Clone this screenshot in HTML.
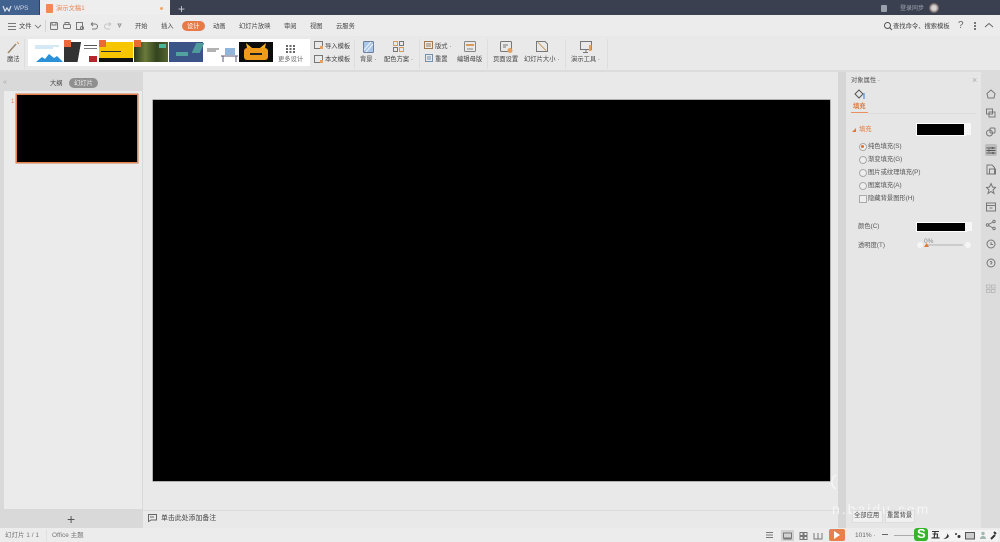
<!DOCTYPE html>
<html lang="zh"><head><meta charset="utf-8"><title>WPS</title>
<style>
html,body{margin:0;padding:0;background:#e8e8e8}
#r{position:relative;width:1000px;height:542px;overflow:hidden;background:#e8e8e8;font-family:"Liberation Sans","Noto Sans CJK SC",sans-serif;color:#555;filter:blur(.35px)}
#r div,#r span.t,#r svg{position:absolute}
.t{position:absolute;white-space:nowrap;font-size:6.3px;line-height:10px;color:#555;transform:translateY(.8px)}
svg{overflow:visible}
</style></head><body><div id="r">
<!-- title bar -->
<div style="left:0;top:0;width:1000px;height:15px;background:#3b4050"></div>
<div style="left:0;top:0;width:39px;height:15px;background:#41618f"></div>
<div style="left:40px;top:0;width:130px;height:15px;background:#eeeeee"></div>
<svg style="left:3px;top:6px" width="8" height="6"><path d="M0 0L2 5L4 2L6 5L8 0" fill="none" stroke="#d5deea" stroke-width="1.2"/></svg>
<span class="t" style="left:14px;top:3px;color:#cfd8e6">WPS</span>
<div style="left:46px;top:4px;width:7px;height:9px;background:#ee8a55;border-radius:1px"></div>
<span class="t" style="left:56px;top:3px;color:#e98552">演示文稿1</span>
<div style="left:160px;top:7px;width:3px;height:3px;background:#eda765;border-radius:50%"></div>
<span class="t" style="left:178px;top:3px;font-size:12px;color:#c8ccd4">+</span>
<div style="left:881px;top:5px;width:6px;height:7px;background:#9aa0ac;border-radius:1px"></div>
<span class="t" style="left:900px;top:3px;font-size:6px;color:#a0a5b0">登录同步</span>
<div style="left:929px;top:3px;width:10px;height:10px;background:radial-gradient(circle,#d8d4d4 30%,#6a5a5a 70%);border-radius:50%"></div>

<!-- toolbar -->
<div style="left:0;top:15px;width:1000px;height:21px;background:#ececec"></div>
<svg style="left:8px;top:23px" width="8" height="7"><path d="M0 .5H8M0 3.5H8M0 6.5H8" stroke="#777" stroke-width="1"/></svg>
<span class="t" style="left:19px;top:21px;color:#444">文件</span>
<svg style="left:35px;top:25px" width="6" height="4"><path d="M0 0L3 3L6 0" fill="none" stroke="#888"/></svg>
<div style="left:45px;top:20px;width:1px;height:12px;background:#d4d4d4"></div>
<svg style="left:50px;top:22px" width="70" height="8" fill="none" stroke="#777">
<rect x=".5" y=".5" width="7" height="7" rx="1"/><path d="M2 .5V3H6V.5"/>
<rect x="13.5" y="2.5" width="7" height="4" rx="1"/><path d="M15 2V.5H19V2"/>
<rect x="26.5" y=".5" width="6" height="7"/><circle cx="32" cy="6" r="1.5"/>
<path d="M41 2H45A2.5 2.500 0 0 1 45 7H42M41 2L43 .5M41 2L43 4"/>
<path d="M61 2H57A2.5 2.500 0 0 0 57 7H60M61 2L59 .5M61 2L59 4" stroke="#c4c4c4"/>
<path d="M68 2H71L69.500 5Z" stroke="#999"/>
</svg>
<span class="t" style="left:135px;top:21px;color:#444">开始</span>
<span class="t" style="left:161px;top:21px;color:#444">插入</span>
<div style="left:182px;top:21px;width:23px;height:10px;background:#e67b48;border-radius:5px"></div>
<span class="t" style="left:187px;top:21px;color:#fff">设计</span>
<span class="t" style="left:213px;top:21px;color:#444">动画</span>
<span class="t" style="left:239px;top:21px;color:#444">幻灯片放映</span>
<span class="t" style="left:284px;top:21px;color:#444">审阅</span>
<span class="t" style="left:310px;top:21px;color:#444">视图</span>
<span class="t" style="left:336px;top:21px;color:#444">云服务</span>
<svg style="left:884px;top:22px" width="8" height="8" fill="none" stroke="#555"><circle cx="3.500" cy="3.500" r="3"/><path d="M5.500 5.500L8 8"/></svg>
<span class="t" style="left:893px;top:21px;color:#444">查找命令、搜索模板</span>
<span class="t" style="left:958px;top:20px;font-size:10px;color:#666">?</span>
<div style="left:974px;top:22px;width:2px;height:2px;background:#777;box-shadow:0 3px #777,0 6px #777"></div>
<svg style="left:985px;top:23px" width="8" height="5"><path d="M0 4L4 .5L8 4" fill="none" stroke="#666"/></svg>

<!-- ribbon -->
<div style="left:0;top:36px;width:1000px;height:35px;background:#e9e9e9"></div>
<div style="left:0;top:70px;width:1000px;height:2px;background:#dcdcdc"></div>
<svg style="left:7px;top:41px" width="13" height="13" fill="none" stroke="#9a8a70"><path d="M1 12L9 3" stroke-width="1.600"/><path d="M10 1L12 3" stroke="#d79a55"/></svg>
<span class="t" style="left:7px;top:54px;color:#444">魔法</span>
<div style="left:24px;top:39px;width:1px;height:30px;background:#dedede"></div>
<div style="left:28px;top:39px;width:282px;height:27px;background:#fff"></div>
<!-- template 1 -->
<svg style="left:33px;top:42px" width="31" height="21"><rect width="31" height="21" fill="#fff"/><path d="M2 4H26M2 6H20" stroke="#a8d0ee"/><path d="M3 20L9 15L12 17L16 12L21 16L24 14L30 20Z" fill="#2a91d8"/></svg>
<!-- template 2 -->
<div style="left:64px;top:42px;width:34px;height:20px;background:linear-gradient(100deg,#333 0 45%,#fff 46%)"></div>
<div style="left:89px;top:56px;width:8px;height:6px;background:#b8242c"></div>
<div style="left:84px;top:45px;width:13px;height:1px;background:#555;box-shadow:0 3px #777"></div>
<!-- template 3 -->
<div style="left:99px;top:42px;width:34px;height:20px;background:#f7c600"></div>
<div style="left:99px;top:58px;width:34px;height:4px;background:#111"></div>
<div style="left:101px;top:51px;width:20px;height:1px;background:#333"></div>
<!-- template 4 -->
<div style="left:134px;top:42px;width:34px;height:20px;background:linear-gradient(90deg,#2d3a1c,#6a7a3a,#33441f,#56642e)"></div>
<div style="left:159px;top:44px;width:7px;height:4px;background:#4fb49a"></div>
<!-- template 5 -->
<div style="left:169px;top:42px;width:34px;height:20px;background:#3a5488"></div>
<div style="left:194px;top:43px;width:8px;height:10px;background:#4f9a9a;transform:skewX(-25deg)"></div>
<div style="left:176px;top:52px;width:12px;height:4px;background:#52a0a0"></div>
<!-- template 6 -->
<svg style="left:204px;top:42px" width="34" height="20"><rect width="34" height="20" fill="#fff"/><path d="M3 7H15M3 9H12" stroke="#666"/><rect x="21" y="6" width="10" height="7" fill="#8fb5dc"/><path d="M17 14H34M19 14V20M32 14V20" stroke="#5a5a7a"/></svg>
<!-- template 7 -->
<div style="left:239px;top:42px;width:34px;height:20px;background:#0c0c0c"></div>
<div style="left:244px;top:48px;width:24px;height:12px;background:#f09a1c;border-radius:3px"></div>
<div style="left:250px;top:53px;width:12px;height:2px;background:#222"></div>
<svg style="left:244px;top:43px" width="24" height="6"><path d="M2 0L8 5H3ZM22 0L16 5H21Z" fill="#f5b01e"/></svg>
<!-- badges -->
<div style="left:64px;top:40px;width:7px;height:7px;background:#ea6a3a"></div>
<div style="left:99px;top:40px;width:7px;height:7px;background:#ea6a3a"></div>
<div style="left:134px;top:40px;width:7px;height:7px;background:#ea6a3a"></div>
<svg style="left:286px;top:45px" width="9" height="8" fill="#666"><path d="M0 0h2v2H0zM3.500 0h2v2h-2zM7 0h2v2H7zM0 3h2v2H0zM3.500 3h2v2h-2zM7 3h2v2H7zM0 6h2v2H0zM3.500 6h2v2h-2zM7 6h2v2H7z"/></svg>
<span class="t" style="left:278px;top:54px;color:#666">更多设计</span>
<svg style="left:314px;top:41px" width="10" height="24" fill="none" stroke="#777"><rect x=".5" y=".5" width="8" height="7"/><rect x=".5" y="14.500" width="8" height="7"/><rect x="6" y="5" width="3" height="3" fill="#e5a05c" stroke="none"/><rect x="6" y="19" width="3" height="3" fill="#e5a05c" stroke="none"/></svg>
<span class="t" style="left:325px;top:41px;color:#444">导入模板</span>
<span class="t" style="left:325px;top:54px;color:#444">本文模板</span>
<div style="left:354px;top:39px;width:1px;height:30px;background:#dedede"></div>
<svg style="left:363px;top:41px" width="11" height="12"><rect x=".5" y=".5" width="10" height="11" rx="1" fill="#a9c6e8" stroke="#6d7f99"/><path d="M1 9L8 1M3 11L10 3" stroke="#eef3fa"/></svg>
<span class="t" style="left:360px;top:54px;color:#444">背景 ·</span>
<svg style="left:393px;top:41px" width="11" height="11" fill="none" stroke="#777"><rect x=".5" y=".5" width="4" height="4" stroke="#d89a5a"/><rect x="6.500" y=".5" width="4" height="4"/><rect x=".5" y="6.500" width="4" height="4"/><rect x="6.500" y="6.500" width="4" height="4" stroke="#d89a5a"/></svg>
<span class="t" style="left:384px;top:54px;color:#444">配色方案 ·</span>
<div style="left:419px;top:39px;width:1px;height:30px;background:#dedede"></div>
<svg style="left:424px;top:41px" width="9" height="8" fill="none" stroke="#a07a50"><rect x=".5" y=".5" width="8" height="7"/><path d="M2 3H7M2 5H7"/></svg>
<span class="t" style="left:435px;top:41px;color:#444">版式 ·</span>
<svg style="left:424px;top:54px" width="9" height="8" fill="none" stroke="#7790aa"><rect x="1.500" y=".5" width="7" height="7"/><path d="M3 3H7M3 5H7"/></svg>
<span class="t" style="left:435px;top:54px;color:#444">重置</span>
<svg style="left:464px;top:41px" width="12" height="11" fill="none" stroke="#888"><rect x=".5" y=".5" width="11" height="10" rx="1"/><path d="M2 4H10" stroke="#d89a5a" stroke-width="2"/><path d="M3 8H9"/></svg>
<span class="t" style="left:457px;top:54px;color:#444">编辑母版</span>
<div style="left:487px;top:39px;width:1px;height:30px;background:#dedede"></div>
<svg style="left:500px;top:41px" width="13" height="12" fill="none" stroke="#777"><rect x=".5" y=".5" width="11" height="10" rx="1"/><path d="M3 4H8M3 6H6"/><circle cx="10" cy="9.500" r="2.500" fill="#e5a05c" stroke="none"/></svg>
<span class="t" style="left:493px;top:54px;color:#444">页面设置</span>
<svg style="left:536px;top:41px" width="12" height="11" fill="none" stroke="#777"><path d="M.5 .5H9L11.500 3V10.500H.5Z"/><path d="M2 1.500L10 9.500" stroke="#c89a60"/></svg>
<span class="t" style="left:524px;top:54px;color:#444">幻灯片大小 ·</span>
<div style="left:565px;top:39px;width:1px;height:30px;background:#dedede"></div>
<svg style="left:580px;top:41px" width="12" height="12" fill="none" stroke="#777"><rect x=".5" y=".5" width="11" height="8"/><path d="M6 9V12M3 11.500H8"/><rect x="9" y="4" width="2.500" height="6" fill="#e5a05c" stroke="none"/></svg>
<span class="t" style="left:571px;top:54px;color:#444">演示工具 ·</span>
<div style="left:607px;top:39px;width:1px;height:30px;background:#dedede"></div>

<!-- left pane -->
<div style="left:0;top:72px;width:143px;height:456px;background:#d9d9d9"></div>
<span class="t" style="left:3px;top:77px;color:#aaa;font-size:7px">«</span>
<span class="t" style="left:50px;top:78px;color:#444">大纲</span>
<div style="left:69px;top:78px;width:29px;height:10px;background:#8f8f8f;border-radius:5px"></div>
<span class="t" style="left:74px;top:78px;color:#eee">幻灯片</span>
<div style="left:4px;top:91px;width:138px;height:418px;background:#ebebeb"></div>
<span class="t" style="left:11px;top:96px;color:#e98552;font-size:6px">1</span>
<div style="left:16px;top:94px;width:120px;height:67px;background:#000;border:1px solid #e8804c;box-shadow:0 0 0 .5px #c87a50"></div>
<span class="t" style="left:67px;top:511px;font-size:14px;line-height:14px;color:#555">+</span>

<!-- canvas -->
<div style="left:143px;top:72px;width:695px;height:456px;background:#e9e9e9"></div>
<div style="left:153px;top:100px;width:677px;height:381px;background:#000;box-shadow:0 0 0 .5px #777"></div>
<div style="left:143px;top:510px;width:695px;height:1px;background:#dcdcdc"></div>
<svg style="left:148px;top:514px" width="9" height="8" fill="none" stroke="#666"><path d="M.5 .5H8.500V6H3L.5 7.500Z"/><path d="M2 3H6"/></svg>
<span class="t" style="left:161px;top:513px;color:#444;font-size:6.900px">单击此处添加备注</span>
<div style="left:838px;top:72px;width:8px;height:456px;background:#d6d6d6"></div>
<svg style="left:832px;top:474px" width="6" height="16"><path d="M4 1A8 8 0 0 0 4 15" fill="none" stroke="#f6f6f6" stroke-width="1.500"/></svg>

<!-- right panel -->
<div style="left:846px;top:72px;width:135px;height:456px;background:#e6e6e6"></div>
<span class="t" style="left:851px;top:75px;color:#555">对象属性 ·</span>
<span class="t" style="left:972px;top:74px;color:#aaa;font-size:9px">×</span>
<svg style="left:854px;top:89px" width="11" height="11" fill="none" stroke="#555"><path d="M1 5L5 1L9 5L5 9Z"/><path d="M10 4V10" stroke="#6aa0e0" stroke-width="1.500"/></svg>
<span class="t" style="left:853px;top:101px;color:#e07838;font-weight:bold">填充</span>
<div style="left:851px;top:112px;width:17px;height:1px;background:#e8905f"></div>
<div style="left:868px;top:113px;width:108px;height:1px;background:#dcdcdc"></div>
<svg style="left:852px;top:128px" width="4" height="4"><path d="M4 0V4H0Z" fill="#e07838"/></svg>
<span class="t" style="left:859px;top:124px;color:#e07838">填充</span>
<div style="left:916px;top:123px;width:48px;height:11px;background:#000;border:.5px solid #fff"></div>
<div style="left:964px;top:123px;width:7px;height:12px;background:#f7f7f7"></div>
<div style="left:859px;top:143px;width:6px;height:6px;border:.7px solid #aaa;border-radius:50%;background:#f2f2f2"></div>
<div style="left:861px;top:145px;width:3px;height:3px;background:#d8702f;border-radius:50%"></div>
<span class="t" style="left:868px;top:141px">纯色填充(S)</span>
<div style="left:859px;top:156px;width:6px;height:6px;border:.7px solid #aaa;border-radius:50%;background:#eee"></div>
<span class="t" style="left:868px;top:154px">渐变填充(G)</span>
<div style="left:859px;top:169px;width:6px;height:6px;border:.7px solid #aaa;border-radius:50%;background:#eee"></div>
<span class="t" style="left:868px;top:167px">图片或纹理填充(P)</span>
<div style="left:859px;top:182px;width:6px;height:6px;border:.7px solid #aaa;border-radius:50%;background:#eee"></div>
<span class="t" style="left:868px;top:180px">图案填充(A)</span>
<div style="left:859px;top:195px;width:6px;height:6px;border:.7px solid #aaa;background:#eee"></div>
<span class="t" style="left:868px;top:193px">隐藏背景图形(H)</span>
<span class="t" style="left:858px;top:221px">颜色(C)</span>
<div style="left:916px;top:222px;width:49px;height:8px;background:#000;border:.5px solid #fff"></div>
<div style="left:965px;top:222px;width:7px;height:9px;background:#f7f7f7"></div>
<span class="t" style="left:858px;top:240px">透明度(T)</span>
<span class="t" style="left:924px;top:236px;color:#888;font-size:6.500px">0%</span>
<div style="left:926px;top:244px;width:37px;height:1.500px;background:#ccc"></div>
<svg style="left:924px;top:243px" width="5" height="5"><path d="M2.500 0L5 4H0Z" fill="#e07838"/></svg>
<div style="left:917px;top:242px;width:6px;height:6px;background:#f5f5f5;border-radius:50%"></div>
<div style="left:965px;top:242px;width:6px;height:6px;background:#f5f5f5;border-radius:50%"></div>

<!-- watermark and panel buttons, above the panel -->
<span class="t" style="left:832px;top:500px;font-size:14px;line-height:16px;color:#f6f6f6;letter-spacing:2px">n.baidu.com</span>
<div style="left:852px;top:510px;width:29px;height:11px;background:#f0f0f0;border:.5px solid #ddd"></div>
<span class="t" style="left:854px;top:510px;font-size:6.300px;color:#444">全部应用</span>
<div style="left:885px;top:510px;width:28px;height:11px;background:#f0f0f0;border:.5px solid #ddd"></div>
<span class="t" style="left:887px;top:510px;font-size:6.300px;color:#444">重置背景</span>

<!-- right sidebar -->
<div style="left:981px;top:72px;width:19px;height:456px;background:#dcdcdc"></div>
<div style="left:985px;top:144px;width:12px;height:12px;background:#bdbdbd;border-radius:2px"></div>
<svg style="left:986px;top:90px" width="10" height="204" fill="none" stroke="#777">
<path d="M5 0L9 3.500L8 8H2L1 3.500Z"/>
<rect x=".5" y="19" width="6" height="5"/><rect x="3" y="22" width="6" height="5"/>
<circle cx="3.500" cy="43" r="3"/><rect x="4" y="38" width="5" height="5" rx="1"/>
<path d="M.5 58H9.500M.5 60.500H9.500M.5 63H9.500" stroke="#555"/><circle cx="6.500" cy="58" r="1" fill="#555" stroke="none"/><circle cx="3" cy="60.500" r="1" fill="#555" stroke="none"/><circle cx="7" cy="63" r="1" fill="#555" stroke="none"/>
<path d="M1 75H6L8.500 77.500V84H1Z"/><rect x="3.500" y="79" width="6" height="5"/>
<path d="M5 93.500L6.500 97L9.500 97.500L7 100L8 103.500L5 101.500L2 103.500L3 100L.5 97.500L3.500 97Z"/>
<rect x=".5" y="113" width="9" height="8"/><path d="M.5 115.500H9.500M3.500 118H6.500"/>
<circle cx="1.500" cy="135" r="1.200"/><circle cx="8" cy="131.500" r="1.200"/><circle cx="8" cy="138.500" r="1.200"/><path d="M2.500 134.500L7 132M2.500 135.500L7 138"/>
<circle cx="5" cy="154" r="4"/><path d="M5 152V154.500H7"/>
<circle cx="5" cy="173" r="4"/><path d="M4 172A1 1 0 1 1 5 173.500V174.500"/>
<g stroke="#bbb"><rect x=".5" y="195" width="3.500" height="3"/><rect x="5.500" y="195" width="3.500" height="3"/><rect x=".5" y="199.500" width="3.500" height="3"/><rect x="5.500" y="199.500" width="3.500" height="3"/></g>
</svg>

<!-- status bar -->
<div style="left:0;top:528px;width:1000px;height:14px;background:#ececec"></div>
<span class="t" style="left:5px;top:530px;color:#777;font-size:6.500px">幻灯片 1 / 1</span>
<div style="left:46px;top:529px;width:1px;height:12px;background:#e0e0e0"></div>
<span class="t" style="left:52px;top:530px;color:#777;font-size:6.500px">Office 主题</span>
<svg style="left:766px;top:532px" width="11" height="6" fill="none" stroke="#777"><path d="M0 .5H7M0 3H7M0 5.500H7"/></svg>
<div style="left:781px;top:530px;width:13px;height:11px;background:#d2d2d2"></div>
<svg style="left:783px;top:532px" width="50" height="8" fill="none" stroke="#777"><rect x=".5" y="1" width="8" height="5"/><path d="M.5 7H8.500"/><rect x="17" y=".5" width="3" height="3"/><rect x="21" y=".5" width="3" height="3"/><rect x="17" y="4.500" width="3" height="3"/><rect x="21" y="4.500" width="3" height="3"/><path d="M31 1V7H35V1M39 1V7H35"/></svg>
<div style="left:829px;top:529px;width:16px;height:12px;background:#e8804c;border-radius:2px"></div>
<svg style="left:834px;top:531px" width="6" height="8"><path d="M0 0L6 4L0 8Z" fill="#fff"/></svg>
<span class="t" style="left:855px;top:530px;color:#666;font-size:6.500px">101% ·</span>
<div style="left:882px;top:534px;width:6px;height:1px;background:#666"></div>
<div style="left:894px;top:535px;width:24px;height:1px;background:#aaa"></div>
<!-- IME -->
<div style="left:914px;top:528px;width:14px;height:13px;background:#35b52a;border-radius:3px"></div>
<span class="t" style="left:917px;top:526px;font-size:13px;line-height:14px;font-weight:bold;color:#fff">S</span>
<div style="left:928px;top:530px;width:70px;height:11px;background:#f4f4f4"></div>
<span class="t" style="left:931px;top:529px;font-size:9px;color:#333;font-weight:bold">五</span>
<svg style="left:943px;top:531px" width="54" height="9"><path d="M3 1A3.500 3.500 0 0 1 0 7A4 4 0 0 0 6 5Z" fill="#333"/><circle cx="13" cy="3" r="1" fill="#333"/><circle cx="16" cy="5.500" r="1.500" fill="#333"/><rect x="22.500" y="1.500" width="9" height="6.500" fill="#ccc" stroke="#555"/><circle cx="40" cy="2.500" r="1.700" fill="#9fb8b0"/><path d="M37 8C37 4 43 4 43 8Z" fill="#9fb8b0"/><path d="M48 8L52 4M51 1L53 3" stroke="#333" stroke-width="2"/></svg>
</div></body></html>
